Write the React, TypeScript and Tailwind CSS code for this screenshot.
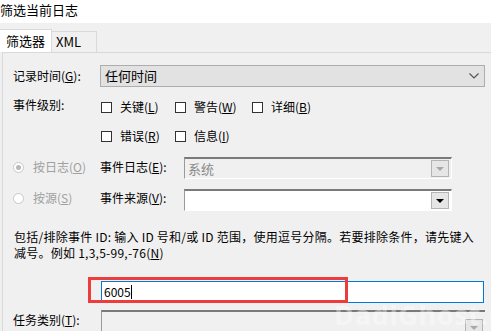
import React from "react";

const font = { fontFamily: '"Noto Sans CJK SC", "Noto Sans", sans-serif' };

function Box({ label }: { label: React.ReactNode }) {
  return (
    <div className="flex items-center gap-[8px]">
      <span className="w-[11px] h-[11px] border border-[#333] bg-white"></span>
      <span>{label}</span>
    </div>
  );
}

function Radio({ label, checked }: { label: React.ReactNode; checked?: boolean }) {
  return (
    <div className="flex items-center gap-[9px] w-[87px] text-[#a0a0a0]">
      <span className="w-[11px] h-[11px] rounded-full border border-[#c8c8c8] bg-white flex items-center justify-center">
        {checked && <span className="w-[5px] h-[5px] rounded-full bg-[#b8b8b8]"></span>}
      </span>
      <span>{label}</span>
    </div>
  );
}

function DropBtn({ disabled }: { disabled?: boolean }) {
  return (
    <span className="w-[18px] h-[17px] border border-[#b4b4b4] bg-[#e6e6e6] flex items-center justify-center">
      <svg width="8" height="4" viewBox="0 0 8 4">
        <path d="M0 0h8L4 4z" fill={disabled ? "#a8a8a8" : "#000"} />
      </svg>
    </span>
  );
}

function Combo({ disabled, value }: { disabled?: boolean; value?: string }) {
  return (
    <div
      className={
        "w-[268px] h-[22px] border-t-2 border-l border-t-[#7a7a7a] border-l-[#9a9a9a] border-b border-r border-b-white border-r-white flex items-center justify-between pr-[2px] " +
        (disabled ? "bg-[#f0f0f0] text-[#8a8a8a]" : "bg-white")
      }
    >
      <span className="pl-[3px] text-[13px] leading-none">{value}</span>
      <DropBtn disabled={disabled} />
    </div>
  );
}

const U = ({ c }: { c: string }) => <span className="underline">{c}</span>;

export default function App() {
  return (
    <div className="relative w-[491px] h-[331px] overflow-hidden bg-[#f0f0f0] text-[12px] text-black" style={font}>
      <div className="h-[23px] bg-white text-[13px] leading-[20px]">筛选当前日志</div>

      <div className="h-[29px] flex items-end">
        <div className="w-[52px] h-[23px] bg-white border-t border-r border-[#d9d9d9] pl-[6px] text-[13px] leading-[22px]">筛选器</div>
        <div className="w-[45px] h-[21px] border-t border-r border-[#d9d9d9] pl-[4px] text-[13px] leading-[20px]">XML</div>
      </div>

      <div className="ml-[2px] h-[300px] border-t border-l border-[#d9d9d9] pl-[10px]">
        <div className="mt-[12px] h-[22px] flex items-center">
          <span className="w-[87px]">
            记录时间(<U c="G" />):
          </span>
          <div className="w-[385px] h-[22px] bg-[#e2e2e2] border border-[#adadad] flex items-center justify-between px-[4px]">
            <span className="text-[13px]">任何时间</span>
            <svg width="10" height="6" viewBox="0 0 10 6" className="mr-[1px]">
              <path d="M0.5 0.5L5 5L9.5 0.5" fill="none" stroke="#555" strokeWidth="1.2" />
            </svg>
          </div>
        </div>

        <div className="mt-[11px] h-[18px] flex items-center">
          <span className="w-[88px] self-start leading-[14px]">事件级别:</span>
          <div className="flex gap-[0px]">
            <div className="w-[74px]"><Box label={<>关键(<U c="L" />)</>} /></div>
            <div className="w-[77px]"><Box label={<>警告(<U c="W" />)</>} /></div>
            <Box label={<>详细(<U c="B" />)</>} />
          </div>
        </div>

        <div className="mt-[11px] h-[18px] flex items-center pl-[88px]">
          <div className="w-[74px]"><Box label={<>错误(<U c="R" />)</>} /></div>
          <Box label={<>信息(<U c="I" />)</>} />
        </div>

        <div className="mt-[12px] h-[22px] flex items-start">
          <div className="pt-[1px]"><Radio checked label={<>按日志(<U c="O" />)</>} /></div>
          <span className="w-[84px] pt-[1px]">
            事件日志(<U c="E" />):
          </span>
          <Combo disabled value="系统" />
        </div>

        <div className="mt-[10px] h-[22px] flex items-start">
          <Radio label={<>按源(<U c="S" />)</>} />
          <span className="w-[84px]">
            事件来源(<U c="V" />):
          </span>
          <Combo />
        </div>

        <div className="mt-[18px] leading-[16px] whitespace-nowrap pl-[1px] tracking-[0.25px]">
          <div>包括/排除事件 ID: 输入 ID 号和/或 ID 范围，使用逗号分隔。若要排除条件，请先键入</div>
          <div>减号。例如 1,3,5-99,-76(<U c="N" />)</div>
        </div>

        <div className="mt-[20px] h-[22px] ml-[88px] w-[383px] bg-white border border-[#0078d7] flex items-center pl-[2px] text-[12px]">
          6005<span className="w-[1px] h-[14px] bg-black"></span>
        </div>

        <div className="mt-[7px] flex items-start">
          <span className="w-[88px] pt-[1px]">
            任务类别(<U c="T" />):
          </span>
          <div className="w-[384px] h-[30px] border-t-2 border-l border-t-[#7a7a7a] border-l-[#9a9a9a] bg-[#f0f0f0] flex justify-end pt-[7px] pr-[2px]">
            <DropBtn disabled />
          </div>
        </div>
      </div>

      <div className="absolute left-[88px] top-[277px] w-[260px] h-[26px] border-[3px] border-[#ee3b3b]"></div>
      <div
        className="absolute left-[334px] top-[300px] text-[27px] leading-[30px] font-bold text-white/40 tracking-wide"
        style={{ fontFamily: '"Open Sans", sans-serif' }}
      >
        DadiGhost.com
      </div>
    </div>
  );
}
